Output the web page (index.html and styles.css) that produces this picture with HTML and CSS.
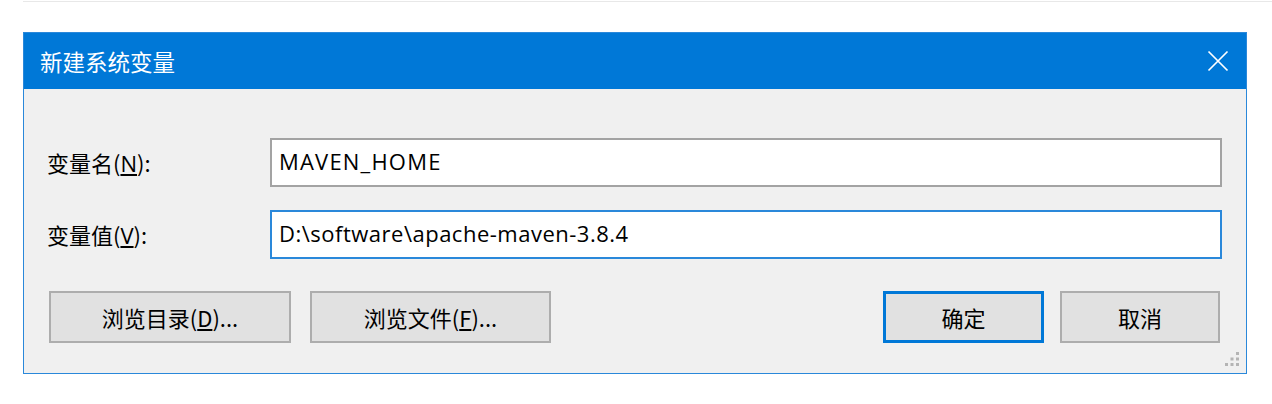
FILE: index.html
```html
<!DOCTYPE html>
<html lang="zh-CN">
<head>
<meta charset="utf-8">
<title>新建系统变量</title>
<link rel="stylesheet" href="styles.css">
</head>
<body>
<div class="page">
  <div class="topline"></div>
  <div class="dialog">
    <div class="titlebar">
      <span class="title">新建系统变量</span>
      <svg class="close" width="22" height="22" viewBox="0 0 22 22" aria-hidden="true">
        <path d="M1.5 1.5 L20.5 20.5 M20.5 1.5 L1.5 20.5" stroke="#ffffff" stroke-width="1.7" fill="none"/>
      </svg>
    </div>
    <div class="body">
      <div class="form">
        <label class="label">变量名(<u>N</u>):</label>
        <div class="input caps">MAVEN_HOME</div>
        <label class="label">变量值(<u>V</u>):</label>
        <div class="input focused">D:\software\apache-maven-3.8.4</div>
      </div>
      <div class="buttons">
        <button class="btn wide">浏览目录(<u>D</u>)...</button>
        <button class="btn wide2">浏览文件(<u>F</u>)...</button>
        <span class="spacer"></span>
        <button class="btn ok default">确定</button>
        <button class="btn cancel">取消</button>
      </div>
      <svg class="grip" width="18" height="18" viewBox="0 0 18 18" aria-hidden="true">
        <rect x="12" y="1" width="3" height="3" fill="#b4b4b4"/>
        <rect x="6.5" y="6.5" width="3" height="3" fill="#b4b4b4"/>
        <rect x="12" y="6.5" width="3" height="3" fill="#b4b4b4"/>
        <rect x="1" y="12" width="3" height="3" fill="#b4b4b4"/>
        <rect x="6.5" y="12" width="3" height="3" fill="#b4b4b4"/>
        <rect x="12" y="12" width="3" height="3" fill="#b4b4b4"/>
      </svg>
    </div>
  </div>
</div>
</body>
</html>
```
FILE: styles.css
```css
html, body {
  margin: 0;
  padding: 0;
  background: #ffffff;
}

body {
  font-family: "Open Sans", "Noto Sans CJK SC", sans-serif;
  color: #000000;
}

.page {
  width: 1272px;
  height: 404px;
  overflow: hidden;
}

.topline {
  margin: 1px 0 0 23px;
  height: 1px;
  background: #e8e8e8;
}

.dialog {
  margin: 30px 0 0 23px;
  width: 1224px;
  box-sizing: border-box;
  border: 1px solid #2a88da;
  background: #f0f0f0;
}

.titlebar {
  height: 56px;
  background: #0078d7;
  display: flex;
  align-items: center;
  justify-content: space-between;
  padding: 0 17px 0 16px;
}

.title {
  color: #ffffff;
  font-size: 22.5px;
  font-family: "Noto Sans CJK SC", sans-serif;
  line-height: 1;
}

.close {
  display: block;
}

.body {
  position: relative;
  padding: 49px 24px 30px 23px;
}

.form {
  display: grid;
  grid-template-columns: 223px 1fr;
  row-gap: 23px;
  align-items: center;
}

.label {
  font-size: 22px;
  line-height: 1;
  font-family: "Noto Sans CJK SC", sans-serif;
}

.label u {
  font-family: "Open Sans", sans-serif;
  text-underline-offset: 2px;
}

.input {
  height: 49px;
  box-sizing: border-box;
  border: 2px solid #a3a3a3;
  background: #ffffff;
  font-size: 22px;
  display: flex;
  align-items: center;
  padding: 0 0 4px 7px;
}

.input.caps {
  letter-spacing: 1.2px;
}

.input.focused {
  border-color: #2a88da;
  letter-spacing: 0.5px;
}

.buttons {
  display: flex;
  margin: 32px 2px 0 2px;
  gap: 19px;
}

.spacer {
  flex: 1;
}

.btn {
  height: 52px;
  box-sizing: border-box;
  border: 2px solid #adadad;
  background: #e1e1e1;
  font-family: "Noto Sans CJK SC", sans-serif;
  font-size: 22px;
  color: #000000;
  padding: 0;
  margin: 0;
}

.btn u {
  text-underline-offset: 2px;
}

.btn.wide {
  width: 242px;
}

.btn.wide2 {
  width: 241px;
}

.btn.ok {
  width: 161px;
}

.btn.cancel {
  width: 160px;
}

.btn.default {
  border: 3px solid #0078d7;
  margin-right: -3px;
}

.grip {
  position: absolute;
  right: 4px;
  bottom: 4px;
}
```
